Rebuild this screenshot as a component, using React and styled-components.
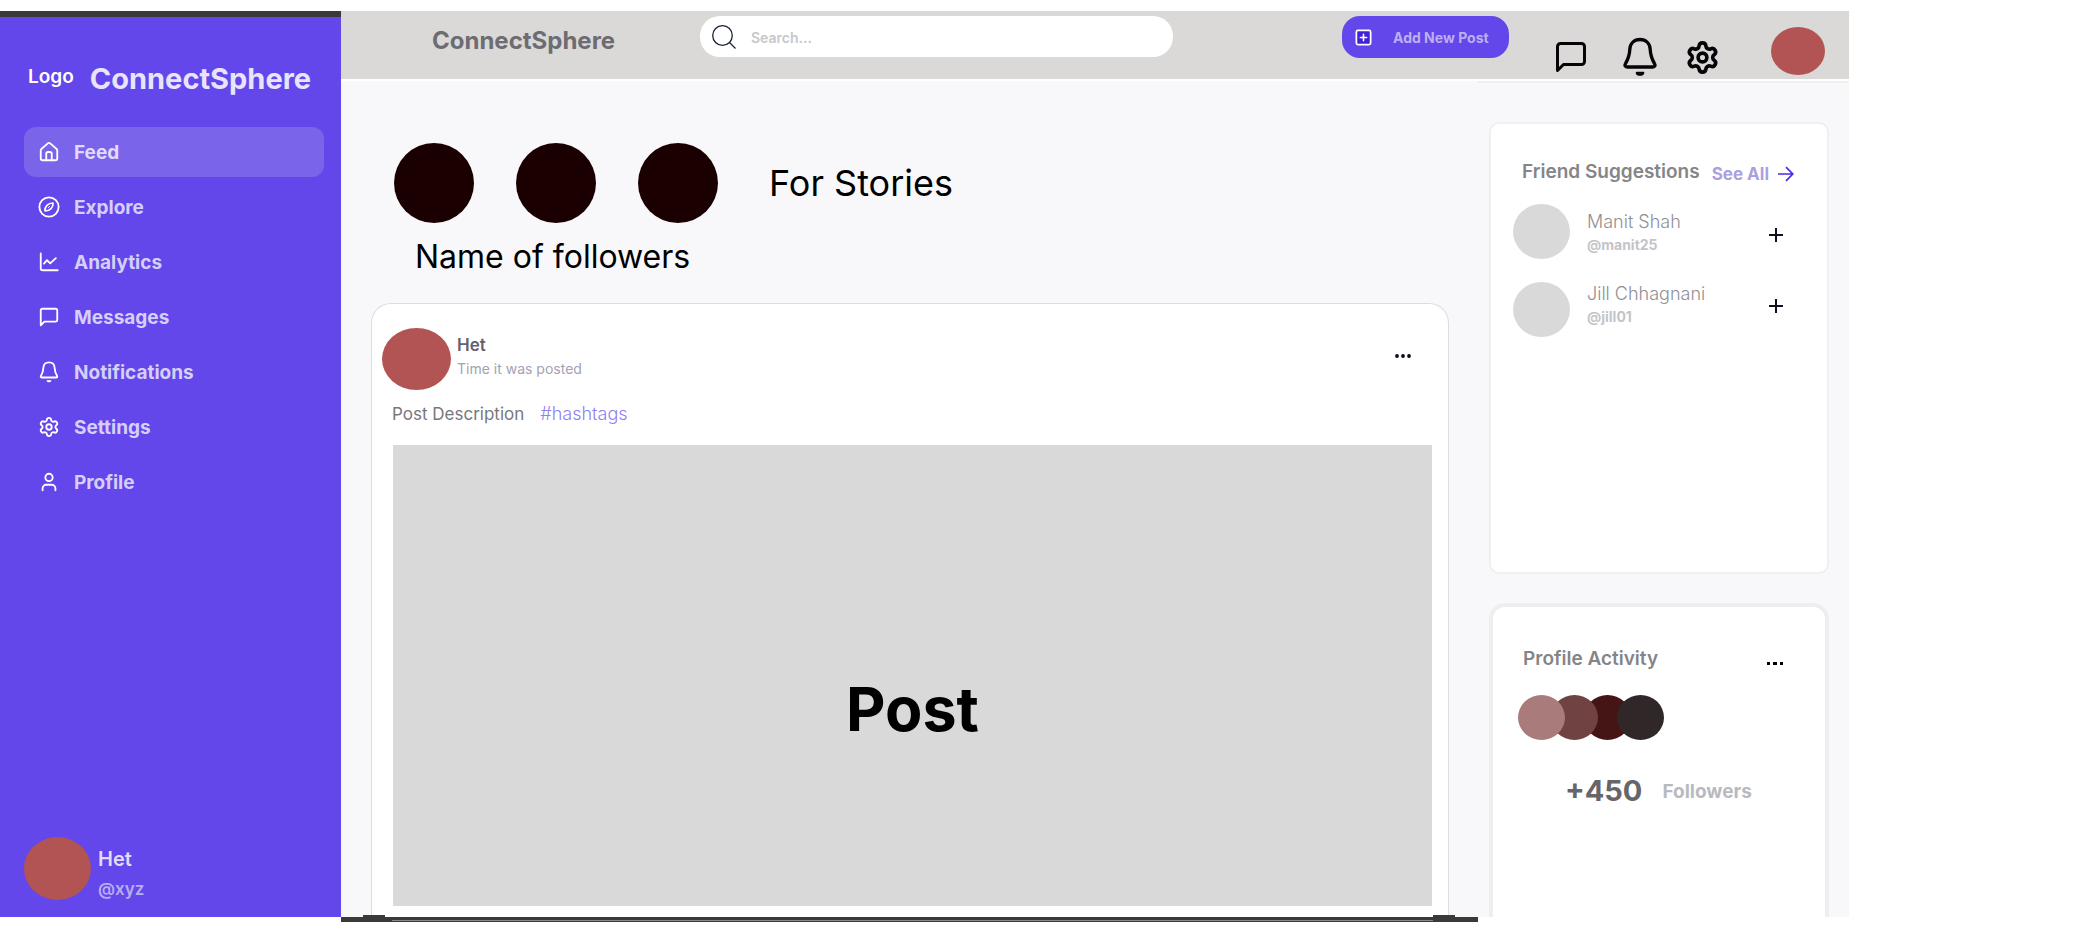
import React from "react";
import styled, { createGlobalStyle } from "styled-components";
import { Settings, User } from "lucide-react";

const GlobalStyle = createGlobalStyle`
  *, *::before, *::after { box-sizing: border-box; }
  body { margin: 0; background: #ffffff; font-family: Inter, "Liberation Sans", sans-serif; }
  h1, h2, h3, p, ul { margin: 0; padding: 0; }
  ul { list-style: none; }
  button { border: 0; padding: 0; background: none; font: inherit; cursor: pointer; }
  a { text-decoration: none; }
  svg { display: block; flex: none; }
`;

const Shell = styled.div`
  display: grid;
  grid-template-columns: 341px minmax(0, 1fr) 371px;
  grid-template-rows: 68px auto 5px;
  margin: 11px 224px 9px 0;
`;

/* Sidebar */
const Sidebar = styled.aside`
  grid-column: 1;
  grid-row: 1 / 3;
  display: flex;
  flex-direction: column;
  padding: 44px 17px 14px 24px;
  border-top: 6px solid #3a3a3a;
  background: #6347ea;
`;

const Brand = styled.div`
  display: flex;
  align-items: center;
  gap: 16px;
  height: 34px;
  padding-left: 4px;
`;

const BrandMark = styled.span`
  color: #ffffff;
  font-size: 19px;
  font-weight: 600;
  line-height: 32px;
  align-self: flex-start;
`;

const BrandName = styled.span`
  color: #e8e4fc;
  font-size: 29px;
  font-weight: 700;
`;

const NavList = styled.ul`
  display: flex;
  flex-direction: column;
  gap: 5px;
  margin-top: 32px;
`;

const NavLink = styled.a`
  display: flex;
  align-items: center;
  gap: 14px;
  height: 50px;
  padding-left: 14px;
  border-radius: 12px;
  background: ${(p) => (p.$active ? "#7a64e9" : "transparent")};
  color: ${(p) => (p.$active ? "#e0dafb" : "#d5cff9")};
  font-size: 19px;
  font-weight: 700;
  svg { color: #ffffff; }
`;

const Account = styled.div`
  display: flex;
  align-items: flex-start;
  gap: 7px;
  margin-top: auto;
`;

const Avatar = styled.span`
  flex: none;
  width: ${(p) => p.$w}px;
  height: ${(p) => p.$h}px;
  border-radius: 50%;
  background: ${(p) => p.$color || "#b35454"};
`;

const AccountText = styled.div`
  display: flex;
  flex-direction: column;
  padding-top: 6px;
`;

const AccountName = styled.span`
  color: #e0dafb;
  font-size: 20px;
  font-weight: 600;
  line-height: 32px;
`;

const AccountHandle = styled.span`
  color: #b9adf4;
  font-size: 17px;
  font-weight: 600;
  line-height: 28px;
`;

/* Header */
const Header = styled.header`
  grid-column: 2 / 4;
  grid-row: 1;
  display: flex;
  align-items: flex-start;
  padding: 5px 24px 0 91px;
  background: #dad9d7;
`;

const HeaderTitle = styled.h1`
  flex: none;
  width: 268px;
  color: #6c6c72;
  font-size: 24px;
  font-weight: 700;
  line-height: 50px;
`;

const SearchBox = styled.label`
  flex: 0 1 473px;
  display: flex;
  align-items: center;
  gap: 15px;
  height: 41px;
  padding: 0 20px 0 12px;
  border-radius: 20px;
  background: #ffffff;
`;

const SearchInput = styled.input`
  flex: 1;
  min-width: 0;
  border: 0;
  padding: 3px 0 0;
  outline: 0;
  background: transparent;
  color: #55555c;
  font-family: inherit;
  font-size: 14px;
  font-weight: 600;
  line-height: 20px;
  &::placeholder { color: #c6c7cb; opacity: 1; }
`;

const AddPost = styled.button`
  flex: none;
  display: flex;
  align-items: center;
  gap: 20px;
  width: 167px;
  height: 42px;
  margin-left: auto;
  padding-left: 12px;
  border-radius: 18px;
  background: #6347ea;
  color: #bcaff0;
  font-size: 14px;
  font-weight: 700;
`;

const HeaderIcons = styled.div`
  flex: none;
  display: flex;
  align-items: center;
  height: 52px;
  margin: 15px 0 0 28px;
`;

const IconButton = styled.button`
  display: flex;
  align-items: center;
  justify-content: center;
  width: ${(p) => p.$w}px;
  color: #050508;
`;

const MenuButton = styled.button`
  display: flex;
  align-items: center;
  justify-content: center;
  align-self: ${(p) => p.$align};
  width: ${(p) => p.$w}px;
  height: ${(p) => p.$h}px;
`;

const HeaderProfile = styled.button`
  display: flex;
  flex: none;
  margin: 11px 0 0 42px;
`;

/* Feed */
const Feed = styled.main`
  grid-column: 2;
  grid-row: 2;
  display: flex;
  flex-direction: column;
  margin-top: 2px;
  padding: 38px 29px 0 30px;
  background: #f8f8fb;
`;

const Stories = styled.section`
  display: flex;
  flex-direction: column;
  gap: 12px;
  height: 164px;
  margin-left: 6px;
  padding: 24px 17px 0;
  background: #f8f8fa;
`;

const StoryRow = styled.div`
  display: flex;
  align-items: center;
  gap: 42px;
`;

const StoriesTitle = styled.h2`
  padding-left: 9px;
  color: #000000;
  font-size: 36px;
  font-weight: 400;
`;

const StoriesNames = styled.p`
  padding-left: 21px;
  color: #000000;
  font-size: 32px;
  font-weight: 400;
  line-height: 44px;
`;

const PostCard = styled.article`
  display: flex;
  flex-direction: column;
  margin-top: 20px;
  padding: 24px 16px 11px 10px;
  border: 1px solid #dcdce3;
  border-bottom: 0;
  border-radius: 20px 20px 0 0;
  background: #ffffff;
`;

const PostHead = styled.div`
  display: flex;
  gap: 6px;
`;

const PostMeta = styled.div`
  flex: 1;
  display: flex;
  flex-direction: column;
  padding-top: 5px;
`;

const PostAuthor = styled.h3`
  color: #64616f;
  font-size: 17px;
  font-weight: 600;
  line-height: 24px;
`;

const PostTime = styled.span`
  color: #a2a2b2;
  font-size: 14px;
  line-height: 24px;
`;

const PostText = styled.p`
  display: flex;
  gap: 16px;
  padding: 12px 0 0 10px;
  color: #77777e;
  font-size: 17px;
  line-height: 24px;
`;

const Hashtag = styled.a`
  color: #9080ef;
  font-size: 18px;
  font-weight: 300;
`;

const PostImage = styled.div`
  display: flex;
  align-items: center;
  justify-content: center;
  height: 461px;
  margin: 19px 0 0 11px;
  padding-top: 66px;
  background: #d9d9d9;
  color: #000000;
  font-size: 61px;
  font-weight: 700;
`;

const BottomEdge = styled.div`
  grid-column: 2;
  grid-row: 3;
  position: relative;
  padding: 3px 45px 0 51px;
  background: #3a3a3a;
  &::before, &::after {
    content: "";
    position: absolute;
    top: -2px;
    width: 22px;
    height: 2px;
    background: #3a3a3a;
  }
  &::before { left: 22px; }
  &::after { right: 23px; }
`;

const EdgeLine = styled.div`
  height: 1px;
  background: #8a8a8a;
`;

/* Right rail */
const Rail = styled.div`
  grid-column: 3;
  grid-row: 2;
  display: flex;
  flex-direction: column;
  gap: 29px;
  margin-top: 2px;
  padding: 39px 20px 0 11px;
  border-top: 2px solid #efeff1;
  background: #f8f8fb;
`;

const SuggestCard = styled.section`
  height: 452px;
  padding: 34px 32px 0 22px;
  border: 2px solid #f0f0f2;
  border-radius: 10px;
  background: #ffffff;
`;

const CardHead = styled.div`
  display: flex;
  align-items: center;
  justify-content: space-between;
  height: 28px;
  padding-left: ${(p) => p.$inset}px;
`;

const CardTitle = styled.h2`
  color: #858588;
  font-size: ${(p) => p.$size}px;
  font-weight: 600;
  line-height: 28px;
  white-space: nowrap;
`;

const SeeAll = styled.a`
  display: flex;
  align-items: center;
  gap: 9px;
  padding: 4px 1px 0 0;
  color: #aa9fe0;
  font-size: 17px;
  font-weight: 700;
  white-space: nowrap;
`;

const FriendList = styled.ul`
  display: flex;
  flex-direction: column;
  gap: 23px;
  margin-top: 18px;
`;

const Friend = styled.li`
  display: flex;
  align-items: ${(p) => p.$align};
  height: 55px;
`;

const FriendText = styled.div`
  flex: 1;
  display: flex;
  flex-direction: column;
  padding: 0 0 3px 17px;
`;

const FriendName = styled.span`
  color: #8f8f94;
  font-size: 18px;
  font-weight: 300;
  line-height: 24px;
`;

const FriendHandle = styled.span`
  color: #c3c4c9;
  font-size: 14px;
  font-weight: 700;
  line-height: 22px;
`;

const AddFriend = styled.button`
  display: flex;
  align-items: center;
  height: 48px;
  padding-right: 12px;
  color: #101020;
`;

const ActivityCard = styled.section`
  flex: 1;
  padding: 38px 41px 0 25px;
  border: 4px solid #eeeef1;
  border-bottom: 0;
  border-radius: 16px 16px 0 0;
  background: #ffffff;
`;

const FollowerStack = styled.div`
  display: flex;
  margin-top: 22px;
  isolation: isolate;
`;

const Follower = styled(Avatar)`
  position: relative;
  z-index: ${(p) => p.$z};
  & + & { margin-left: -14px; }
`;

const FollowerCount = styled.p`
  display: flex;
  align-items: center;
  gap: 20px;
  margin-top: 33px;
  padding-left: 47px;
`;

const CountValue = styled.strong`
  color: #66666a;
  font-size: 29px;
  font-weight: 700;
  line-height: 36px;
`;

const CountLabel = styled.span`
  color: #b9babf;
  font-size: 19px;
  font-weight: 700;
`;

/* Icons */
const Glyph = ({ size = 22, sw = 2, children }) => (
  <svg width={size} height={size} viewBox="0 0 24 24" fill="none" stroke="currentColor" strokeWidth={sw}
    strokeLinecap="round" strokeLinejoin="round" aria-hidden="true">
    {children}
  </svg>
);

const HomeIcon = () => (
  <Glyph>
    <path d="M3 10.2a2 2 0 0 1 .7-1.5l7-6.1a2 2 0 0 1 2.6 0l7 6.1a2 2 0 0 1 .7 1.5V19a2 2 0 0 1-2 2H5a2 2 0 0 1-2-2z" />
    <path d="M9 21v-7a2 2 0 0 1 2-2h2a2 2 0 0 1 2 2v7" />
  </Glyph>
);

const ExploreIcon = () => (
  <Glyph>
    <circle cx="12" cy="12" r="10.5" />
    <path d="M7.6 16.4c-.4-4.6 3.2-8.8 8.8-8.8.4 4.6-3.2 8.8-8.8 8.8z" strokeWidth="1.8" />
    <path d="M11.2 12.800l1.600-1.600" strokeWidth="1" />
  </Glyph>
);

const AnalyticsIcon = () => (
  <Glyph>
    <path d="M3 2.5V19a2 2 0 0 0 2 2h16.5" />
    <path d="M6.5 13.8l3.3-3.8 3.5 3.5 6.2-5.7" />
  </Glyph>
);

const MessageIcon = (props) => (
  <Glyph {...props}>
    <path d="M21 15a2 2 0 0 1-2 2H7l-4 4V5a2 2 0 0 1 2-2h14a2 2 0 0 1 2 2z" />
  </Glyph>
);

const BellIcon = (props) => (
  <Glyph {...props}>
    <path d="M12 1.5c-3.5 0-5.9 2.3-6.1 5.8-.2 4.2-.9 5.8-2.6 8.7-.7 1.2-.2 2 1 2h15.4c1.2 0 1.7-.8 1-2-1.7-2.9-2.4-4.5-2.6-8.7-.2-3.5-2.6-5.8-6.1-5.8z" />
    <path d="M10 21.5h4c-.3.9-1.1 1.2-2 1.2s-1.7-.3-2-1.2z" strokeWidth="1.2" fill="currentColor" />
  </Glyph>
);

const SearchIcon = () => (
  <svg width="24" height="24" viewBox="0 0 24 24" fill="none" stroke="#1a2233" strokeWidth="1.3" aria-hidden="true">
    <circle cx="10.5" cy="10.5" r="9.8" />
    <path d="M17.5 17.5l6 6" />
  </svg>
);

const AddIcon = () => (
  <Glyph size={19} sw={2.2}>
    <rect x="3" y="3" width="18" height="18" rx="2" fill="#4322d4" stroke="#ffffff" />
    <path d="M12 8v8M8 12h8" stroke="#ffffff" strokeWidth="2" />
  </Glyph>
);

const DotsIcon = () => (
  <svg width="18" height="6" viewBox="0 0 18 6" fill="#0c0818" aria-hidden="true">
    <circle cx="3" cy="3" r="1.9" />
    <circle cx="9" cy="3" r="1.9" />
    <circle cx="15" cy="3" r="1.9" />
  </svg>
);

const SquareDotsIcon = () => (
  <svg width="18" height="6" viewBox="0 0 18 6" fill="#000000" aria-hidden="true">
    <path d="M1 2h3v3H1zM7 2h4v3H7zM14 2h3v3h-3z" />
  </svg>
);

const ArrowIcon = () => (
  <svg width="16" height="16" viewBox="0 0 16 16" fill="none" stroke="#4a2be8" strokeWidth="1.7" aria-hidden="true">
    <path d="M0 8h14.5M8 1.2L14.800 8 8 14.800" />
  </svg>
);

const PlusIcon = () => (
  <svg width="14" height="14" viewBox="0 0 14 14" stroke="currentColor" strokeWidth="2" aria-hidden="true">
    <path d="M7 0v14M0 7h14" />
  </svg>
);

const navItems = [
  { label: "Feed", icon: <HomeIcon />, active: true },
  { label: "Explore", icon: <ExploreIcon /> },
  { label: "Analytics", icon: <AnalyticsIcon /> },
  { label: "Messages", icon: <MessageIcon /> },
  { label: "Notifications", icon: <BellIcon /> },
  { label: "Settings", icon: <Settings size={22} /> },
  { label: "Profile", icon: <User size={22} /> },
];

const friends = [
  { name: "Manit Shah", handle: "@manit25", align: "flex-end" },
  { name: "Jill Chhagnani", handle: "@jill01", align: "flex-start" },
];

const followers = [
  { color: "#a97b7a", z: 3 },
  { color: "#704242", z: 2 },
  { color: "#451515", z: 1 },
  { color: "#302728", z: 2 },
];

export default function App() {
  return (
    <>
      <GlobalStyle />
      <Shell>
        <Sidebar>
          <Brand>
            <BrandMark>Logo</BrandMark>
            <BrandName>ConnectSphere</BrandName>
          </Brand>
          <nav>
            <NavList>
              {navItems.map((item) => (
                <li key={item.label}>
                  <NavLink href="#" $active={item.active}>
                    {item.icon}
                    {item.label}
                  </NavLink>
                </li>
              ))}
            </NavList>
          </nav>
          <Account>
            <Avatar $w={67} $h={63} />
            <AccountText>
              <AccountName>Het</AccountName>
              <AccountHandle>@xyz</AccountHandle>
            </AccountText>
          </Account>
        </Sidebar>

        <Header>
          <HeaderTitle>ConnectSphere</HeaderTitle>
          <SearchBox>
            <SearchIcon />
            <SearchInput type="search" placeholder="Search..." aria-label="Search" />
          </SearchBox>
          <AddPost type="button">
            <AddIcon />
            Add New Post
          </AddPost>
          <HeaderIcons>
            <IconButton type="button" aria-label="Messages" $w={68}>
              <MessageIcon size={36} />
            </IconButton>
            <IconButton type="button" aria-label="Notifications" $w={70}>
              <BellIcon size={40} />
            </IconButton>
            <IconButton type="button" aria-label="Settings" $w={54}>
              <Settings size={35} strokeWidth={2.5} />
            </IconButton>
          </HeaderIcons>
          <HeaderProfile type="button" aria-label="Profile">
            <Avatar $w={54} $h={48} />
          </HeaderProfile>
        </Header>

        <Feed>
          <Stories>
            <StoryRow>
              <Avatar $w={80} $h={80} $color="#1a0000" />
              <Avatar $w={80} $h={80} $color="#1a0000" />
              <Avatar $w={80} $h={80} $color="#1a0000" />
              <StoriesTitle>For Stories</StoriesTitle>
            </StoryRow>
            <StoriesNames>Name of followers</StoriesNames>
          </Stories>
          <PostCard>
            <PostHead>
              <Avatar $w={69} $h={62} />
              <PostMeta>
                <PostAuthor>Het</PostAuthor>
                <PostTime>Time it was posted</PostTime>
              </PostMeta>
              <MenuButton type="button" aria-label="Post options" $w={58} $h={56} $align="flex-start">
                <DotsIcon />
              </MenuButton>
            </PostHead>
            <PostText>
              Post Description
              <Hashtag href="#">#hashtags</Hashtag>
            </PostText>
            <PostImage>Post</PostImage>
          </PostCard>
        </Feed>

        <Rail>
          <SuggestCard>
            <CardHead $inset={9}>
              <CardTitle $size={19}>Friend Suggestions</CardTitle>
              <SeeAll href="#">
                See All
                <ArrowIcon />
              </SeeAll>
            </CardHead>
            <FriendList>
              {friends.map((f) => (
                <Friend key={f.handle} $align={f.align}>
                  <Avatar $w={57} $h={55} $color="#d9d9d9" />
                  <FriendText>
                    <FriendName>{f.name}</FriendName>
                    <FriendHandle>{f.handle}</FriendHandle>
                  </FriendText>
                  <AddFriend type="button" aria-label={`Add ${f.name}`}>
                    <PlusIcon />
                  </AddFriend>
                </Friend>
              ))}
            </FriendList>
          </SuggestCard>
          <ActivityCard>
            <CardHead $inset={5}>
              <CardTitle $size={19}>Profile Activity</CardTitle>
              <MenuButton type="button" aria-label="Activity options" $w={18} $h={20} $align="flex-end">
                <SquareDotsIcon />
              </MenuButton>
            </CardHead>
            <FollowerStack>
              {followers.map((f) => (
                <Follower key={f.color} $w={47} $h={45} $color={f.color} $z={f.z} />
              ))}
            </FollowerStack>
            <FollowerCount>
              <CountValue>+450</CountValue>
              <CountLabel>Followers</CountLabel>
            </FollowerCount>
          </ActivityCard>
        </Rail>

        <BottomEdge>
          <EdgeLine />
        </BottomEdge>
      </Shell>
    </>
  );
}
